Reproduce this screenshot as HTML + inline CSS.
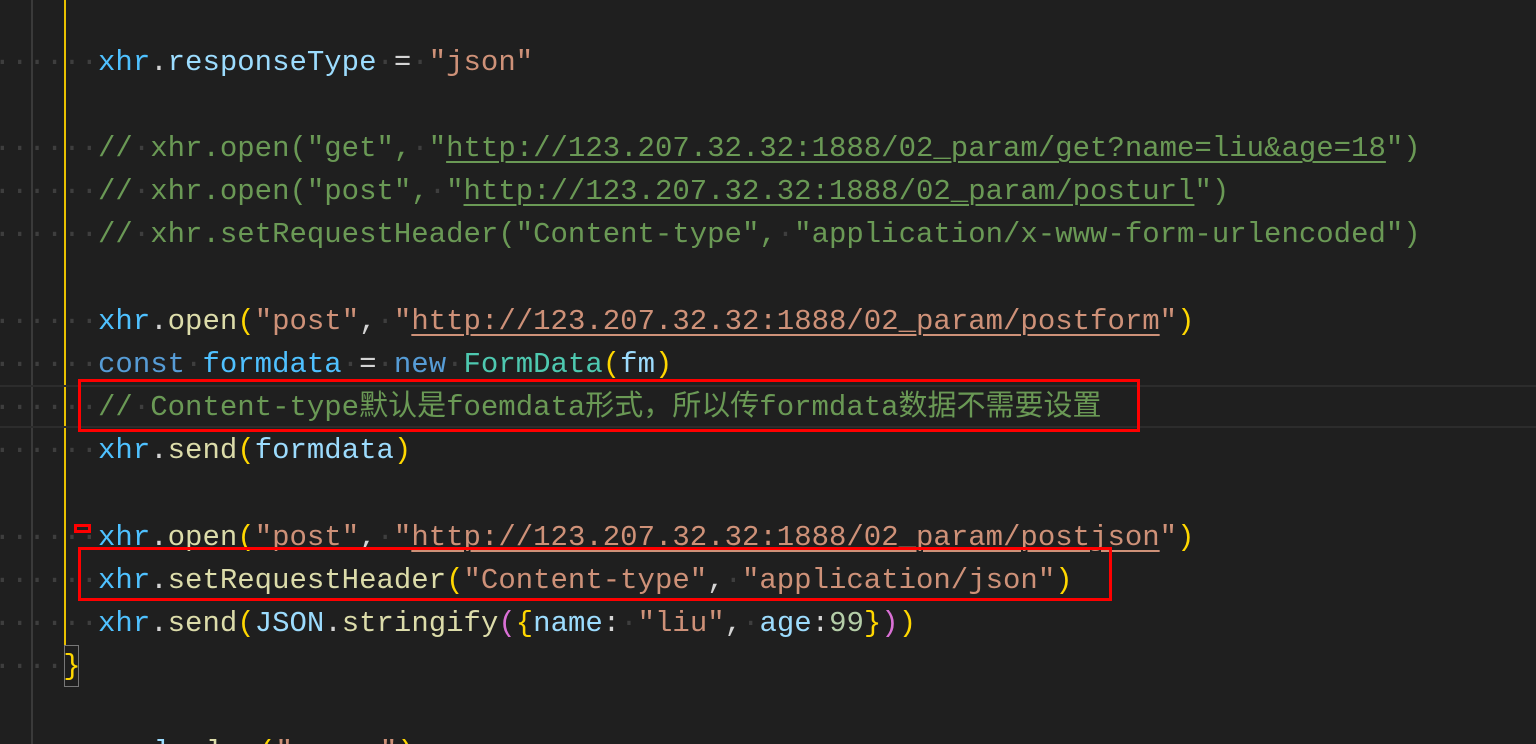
<!DOCTYPE html>
<html><head><meta charset="utf-8"><style>
html,body{margin:0;padding:0;background:#1f1f1f;width:1536px;height:744px;overflow:hidden;position:relative}
.l{position:absolute;left:-6.4px;height:43px;line-height:43px;white-space:pre;font-family:"Liberation Mono","Noto Sans CJK SC",monospace;font-size:29px;color:#d4d4d4}
.d{color:#3e3e3e}
.x{color:#4fc1ff}.p{color:#9cdcfe}.s{color:#ce9178}.c{color:#6a9955}.f{color:#dcdcaa}.y{color:#ffd700}.k{color:#569cd6}.t{color:#4ec9b0}.m{color:#da70d6}.n{color:#b5cea8}
.u{text-decoration:underline;text-underline-offset:5px;text-decoration-thickness:2px}
.g1{position:absolute;left:31px;top:0;width:2px;height:744px;background:#3a3a3a}
.g2{position:absolute;left:64px;top:0;width:2px;height:645px;background:#e8c000}
.box{position:absolute;border:3px solid #f00;box-sizing:border-box}
</style></head><body>
<div class="g1"></div><div class="g2"></div>
<div style="position:absolute;left:0;top:385px;width:1536px;height:43px;border-top:2px solid #2c2c2c;border-bottom:2px solid #2c2c2c;box-sizing:border-box"></div>
<div class="l" style="top:41px"><span class="d">······</span><span class="x">xhr</span>.<span class="p">responseType</span><span class="d">·</span>=<span class="d">·</span><span class="s">"json"</span></div>
<div class="l c" style="top:127px"><span class="d">······</span>//<span class="d">·</span>xhr.open("get",<span class="d">·</span>"<span class="u">http://123.207.32.32:1888/02_param/get?name=liu&amp;age=18</span>")</div>
<div class="l c" style="top:170px"><span class="d">······</span>//<span class="d">·</span>xhr.open("post",<span class="d">·</span>"<span class="u">http://123.207.32.32:1888/02_param/posturl</span>")</div>
<div class="l c" style="top:213px"><span class="d">······</span>//<span class="d">·</span>xhr.setRequestHeader("Content-type",<span class="d">·</span>"application/x-www-form-urlencoded")</div>
<div class="l" style="top:300px"><span class="d">······</span><span class="x">xhr</span>.<span class="f">open</span><span class="y">(</span><span class="s">"post"</span>,<span class="d">·</span><span class="s">"<span class="u">http://123.207.32.32:1888/02_param/postform</span>"</span><span class="y">)</span></div>
<div class="l" style="top:343px"><span class="d">······</span><span class="k">const</span><span class="d">·</span><span class="x">formdata</span><span class="d">·</span>=<span class="d">·</span><span class="k">new</span><span class="d">·</span><span class="t">FormData</span><span class="y">(</span><span class="p">fm</span><span class="y">)</span></div>
<div class="l c" style="top:386px"><span class="d">······</span>//<span class="d">·</span>Content-type默认是foemdata形式，所以传formdata数据不需要设置</div>
<div class="l" style="top:429px"><span class="d">······</span><span class="x">xhr</span>.<span class="f">send</span><span class="y">(</span><span class="p">formdata</span><span class="y">)</span></div>
<div class="l" style="top:516px"><span class="d">······</span><span class="x">xhr</span>.<span class="f">open</span><span class="y">(</span><span class="s">"post"</span>,<span class="d">·</span><span class="s">"<span class="u">http://123.207.32.32:1888/02_param/postjson</span>"</span><span class="y">)</span></div>
<div class="l" style="top:559px"><span class="d">······</span><span class="x">xhr</span>.<span class="f">setRequestHeader</span><span class="y">(</span><span class="s">"Content-type"</span>,<span class="d">·</span><span class="s">"application/json"</span><span class="y">)</span></div>
<div class="l" style="top:602px"><span class="d">······</span><span class="x">xhr</span>.<span class="f">send</span><span class="y">(</span><span class="p">JSON</span>.<span class="f">stringify</span><span class="m">(</span><span class="y">{</span><span class="p">name</span>:<span class="d">·</span><span class="s">"liu"</span>,<span class="d">·</span><span class="p">age</span>:<span class="n">99</span><span class="y">}</span><span class="m">)</span><span class="y">)</span></div>
<div class="l" style="top:645px"><span class="d">····</span><span class="y">}</span></div>
<div style="position:absolute;left:64px;top:645px;width:15px;height:42px;border:1px solid #777;box-sizing:border-box"></div>
<div style="position:absolute;left:0;top:731px;width:1536px;height:13px;overflow:hidden">
<div class="l" style="top:0;left:-3px"><span class="d">    </span><span class="p">console</span>.<span class="f">log</span><span class="y">(</span><span class="s">"xxxxx"</span><span class="y">)</span></div>
</div>
<div class="box" style="left:78px;top:379px;width:1062px;height:53px"></div>
<div class="box" style="left:78px;top:547px;width:1034px;height:54px"></div>
<div class="box" style="left:74px;top:524px;width:17px;height:9px"></div>
</body></html>
